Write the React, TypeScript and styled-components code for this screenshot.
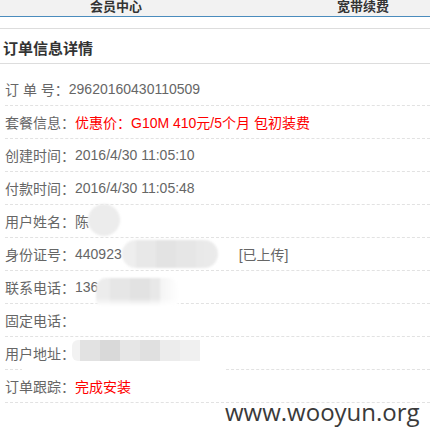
import React from "react";
import styled, { createGlobalStyle } from "styled-components";

const Global = createGlobalStyle`
  html, body { margin: 0; padding: 0; background: #fff; }
  body {
    width: 430px;
    height: 442px;
    overflow: hidden;
    font-family: "Liberation Sans", "Noto Sans CJK SC", sans-serif;
  }
`;

const Page = styled.div`
  position: relative;
  width: 430px;
  height: 442px;
  overflow: hidden;
  background: #fff;
`;

const TopBar = styled.div`
  display: flex;
  align-items: flex-start;
  height: 16px;
  background: #f2f2f2;
  border-bottom: 1px solid #4a8cbd;
`;

const Tab = styled.div<{ $right?: boolean }>`
  font: bold 13px/12px "Noto Sans CJK SC", sans-serif;
  color: #333;
  margin-left: ${(p) => (p.$right ? "auto" : "90px")};
  margin-right: ${(p) => (p.$right ? "41px" : "0")};
`;

const TitleBar = styled.div`
  margin-top: 11px;
  box-sizing: content-box;
  border-top: 1px solid #dddddd;
  border-bottom: 1px solid #dddddd;
  display: flex;
  align-items: center;
  padding: 2px 0 0 3px;
  height: 32px;
  font: bold 15px "Noto Sans CJK SC", sans-serif;
  color: #333;
`;

const List = styled.div`
  margin-top: 9px;
  margin-left: 5px;
`;

const Row = styled.div`
  display: flex;
  align-items: center;
  height: 32px;
  border-bottom: 1px dashed #e2e2e2;
  font-size: 14px;
  color: #666;
  white-space: nowrap;
`;

const Label = styled.span`
  color: #666;
`;

const Value = styled.span<{ $red?: boolean }>`
  color: ${(p) => (p.$red ? "#ff0000" : "#666")};
`;

const Note = styled.span`
  margin-left: 21px;
  color: #666;
`;

const NameBlur = styled.span`
  display: inline-block;
  width: 32px;
  height: 32px;
  border-radius: 50%;
  margin-left: -1px;
  margin-top: -3px;
  background: #ececec;
  filter: blur(0.8px);
`;

const IdBlur = styled.span`
  display: inline-block;
  width: 96px;
  height: 28px;
  border-radius: 14px;
  background: linear-gradient(
    90deg,
    #eeeeee 0px,
    #eeeeee 14px,
    #e8e8e8 14px,
    #e8e8e8 34px,
    #e3e3e3 34px,
    #e3e3e3 54px,
    #e6e6e6 54px,
    #e6e6e6 74px,
    #e9e9e9 74px,
    #ebebeb 96px
  );
  filter: blur(0.8px);
`;

const PhoneBlur = styled.span`
  display: inline-block;
  width: 83px;
  height: 32px;
  border-radius: 10px;
  margin-left: -2px;
  margin-top: 14px;
  background:
    linear-gradient(180deg, rgba(255, 255, 255, 0) 0px, rgba(255, 255, 255, 0) 20px, #ffffff 28px),
    linear-gradient(
      90deg,
      #ececec 0px,
      #ececec 14px,
      #e6e6e6 14px,
      #e6e6e6 34px,
      #e2e2e2 34px,
      #e2e2e2 54px,
      #e8e8e8 54px,
      #e8e8e8 64px,
      #f4f4f4 64px,
      #ffffff 83px
    );
  filter: blur(1.2px);
`;

const AddrBlur = styled.span`
  position: relative;
  display: inline-block;
  width: 128px;
  height: 21px;
  margin-left: -3px;
  margin-top: -6px;
  border-radius: 6px 0 0 6px;
  background: linear-gradient(
    90deg,
    #f2f2f2 0px,
    #f2f2f2 8px,
    #e2e2e2 8px,
    #e2e2e2 28px,
    #d9d9d9 28px,
    #d9d9d9 48px,
    #e6e6e6 48px,
    #e6e6e6 68px,
    #e0e0e0 68px,
    #e0e0e0 88px,
    #ececec 88px,
    #ececec 108px,
    #f0f0f0 108px,
    #f0f0f0 128px
  );
  filter: blur(0.6px);

  &::after {
    content: "";
    position: absolute;
    left: -50px;
    top: 26px;
    width: 204px;
    height: 8px;
    background: #fff;
  }
`;

const Watermark = styled.div`
  position: absolute;
  left: 225px;
  top: 400px;
  font: 24px/24px "Open Sans", sans-serif;
  color: #3a3a3a;
`;

export default function App() {
  return (
    <Page>
      <Global />
      <TopBar>
        <Tab>会员中心</Tab>
        <Tab $right>宽带续费</Tab>
      </TopBar>
      <TitleBar>订单信息详情</TitleBar>
      <List>
        <Row>
          <Label>订 单 号：</Label>
          <Value>29620160430110509</Value>
        </Row>
        <Row>
          <Label>套餐信息：</Label>
          <Value $red>优惠价：G10M 410元/5个月 包初装费</Value>
        </Row>
        <Row>
          <Label>创建时间：</Label>
          <Value>2016/4/30 11:05:10</Value>
        </Row>
        <Row>
          <Label>付款时间：</Label>
          <Value>2016/4/30 11:05:48</Value>
        </Row>
        <Row>
          <Label>用户姓名：</Label>
          <Value>陈</Value>
          <NameBlur />
        </Row>
        <Row>
          <Label>身份证号：</Label>
          <Value>440923</Value>
          <IdBlur />
          <Note>[已上传]</Note>
        </Row>
        <Row>
          <Label>联系电话：</Label>
          <Value>136</Value>
          <PhoneBlur />
        </Row>
        <Row>
          <Label>固定电话：</Label>
        </Row>
        <Row>
          <Label>用户地址：</Label>
          <AddrBlur />
        </Row>
        <Row>
          <Label>订单跟踪：</Label>
          <Value $red>完成安装</Value>
        </Row>
      </List>
      <Watermark>www.wooyun.org</Watermark>
    </Page>
  );
}
